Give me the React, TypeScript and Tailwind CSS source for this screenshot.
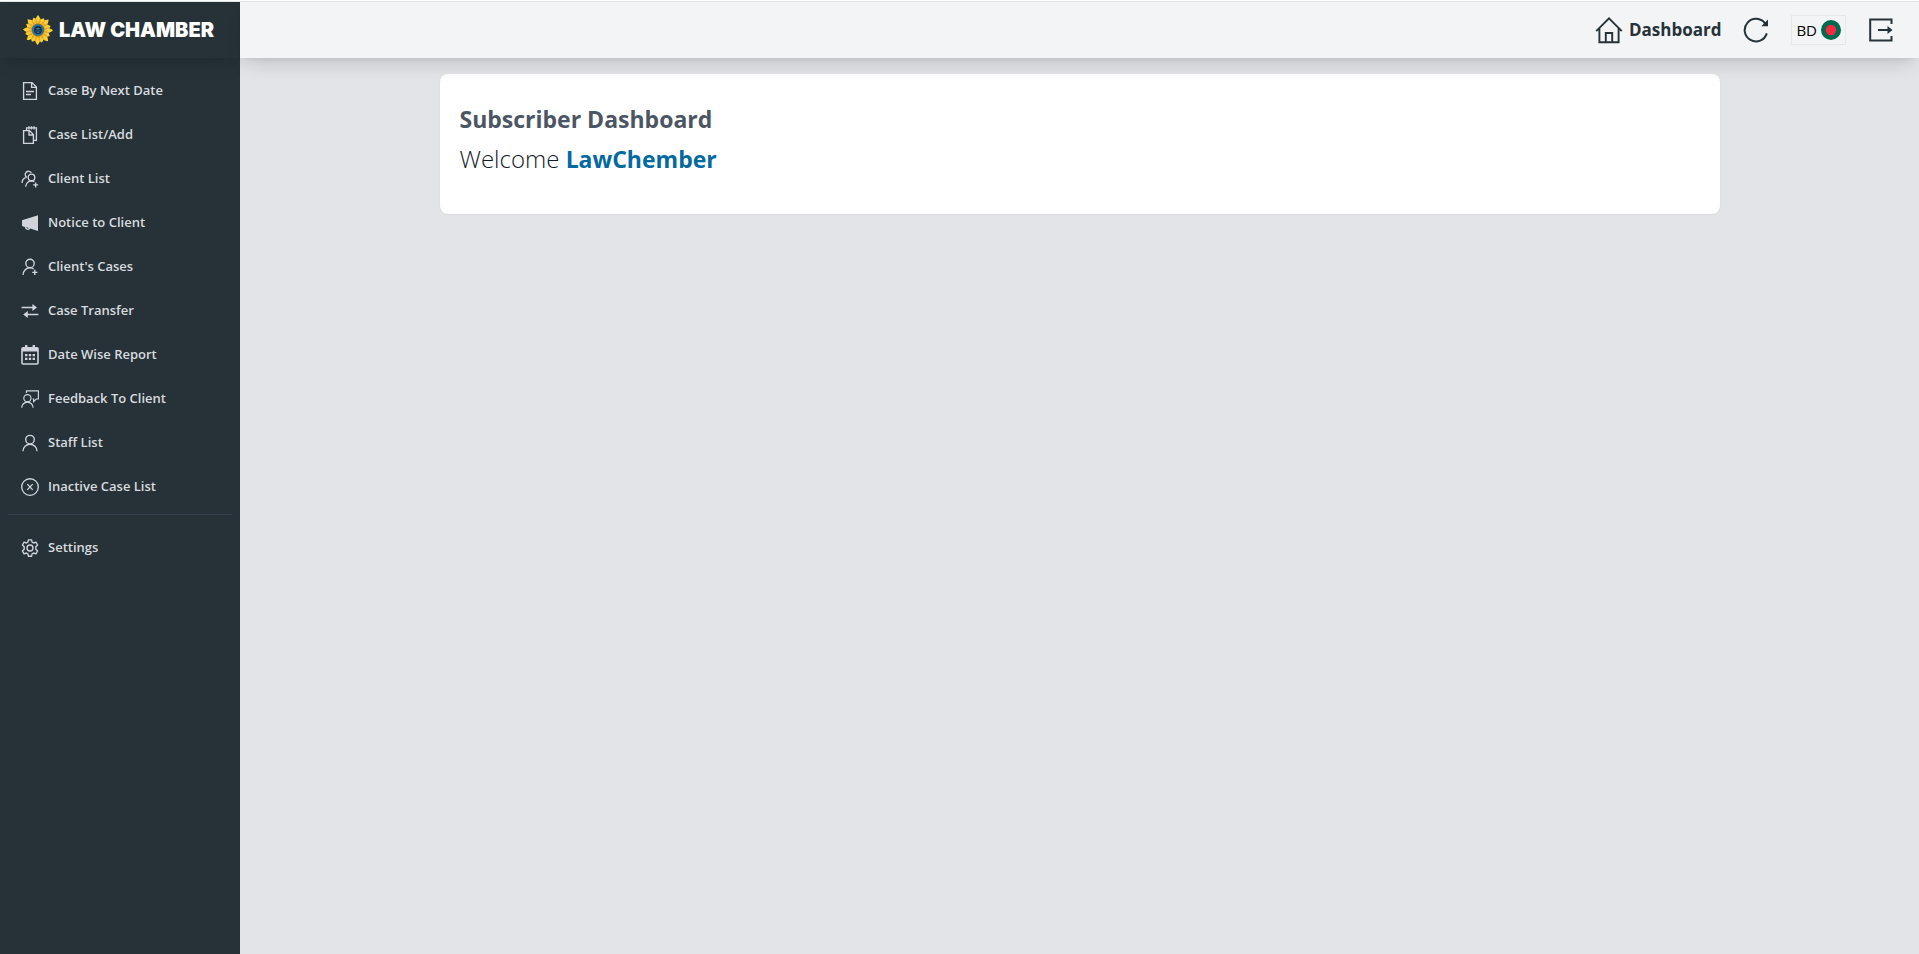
import type { ReactNode } from "react";

const stroke = {
  fill: "none",
  stroke: "currentColor",
  strokeWidth: 1.35,
} as const;

function Icon({ children }: { children: ReactNode }) {
  return (
    <svg viewBox="0 0 18 18" className="size-[18px] shrink-0 overflow-visible text-[#d1d5db]" aria-hidden="true" {...stroke}>
      {children}
    </svg>
  );
}

const items: { label: string; icon: ReactNode }[] = [
  {
    label: "Case By Next Date",
    icon: <path d="M2.6 .6H11L15.4 5V17.4H2.6ZM10.6 .6V5.4H15.4M5 9.5H13M5 12.5H10" />,
  },
  {
    label: "Case List/Add",
    icon: (
      <path d="M2.6 4.6H8.5L12.4 8.5V17.4H2.6ZM8 4.6V9H12.4M5.6 4.4V1.9H15.4V14.4H12.6M8 .2V3.4M10.5 .2V3.4M13 .2V3.4" />
    ),
  },
  {
    label: "Client List",
    icon: (
      <>
        <circle cx="10.5" cy="7.4" r="3.3" />
        <path d="M4.7 16.8A6 6 0 0 1 10.5 10.8Q12.3 10.8 13.3 11.6M5.8 7.4A3.3 3.3 0 1 1 10.3 2.8M5.2 7.4A5.8 5.8 0 0 0 1.1 13M14.6 12.4V17.4M12.1 14.9H17.1" />
      </>
    ),
  },
  {
    label: "Notice to Client",
    icon: (
      <g fill="currentColor" stroke="none">
        <path d="M1 6.2L17 1.2V17L9.2 14.4A2.8 2.8 0 0 1 3.9 13L1 12.1ZM5.2 13.3A1.5 1.5 0 0 0 7.8 14Z" fillRule="evenodd" />
      </g>
    ),
  },
  {
    label: "Client's Cases",
    icon: (
      <>
        <circle cx="9" cy="5.4" r="4.2" />
        <path d="M2.1 17A6.9 6.9 0 0 1 9 9.8Q11.2 9.8 12.7 11M13.8 11.8V17M11.2 14.4H16.4" />
      </>
    ),
  },
  {
    label: "Case Transfer",
    icon: (
      <>
        <path d="M.6 5.5H12M6 12.5H17.4" />
        <path d="M11.4 2L16 5.5L11.4 9ZM6.8 9L2.2 12.5L6.8 16Z" fill="currentColor" stroke="none" />
      </>
    ),
  },
  {
    label: "Date Wise Report",
    icon: (
      <g fill="currentColor" stroke="none">
        <path
          d="M2 1H4V-1H6.4V1H11.6V-1H14V1H16A1.8 1.8 0 0 1 17.8 2.8V17A1.8 1.8 0 0 1 16 18.8H2A1.8 1.8 0 0 1 .2 17V2.8A1.8 1.8 0 0 1 2 1ZM1.8 5.4V17.2H16.2V5.4Z"
          fillRule="evenodd"
        />
        <path d="M4 8H6.4V10.2H4ZM7.8 8H10.2V10.2H7.8ZM11.6 8H14V10.2H11.6ZM4 11.8H6.4V14H4ZM7.8 11.8H10.2V14H7.8ZM11.6 11.8H14V14H11.6Z" />
      </g>
    ),
  },
  {
    label: "Feedback To Client",
    icon: (
      <g strokeWidth="1.15">
        <circle cx="6.4" cy="8.2" r="3.6" />
        <path d="M.7 17.8A5.7 5.7 0 0 1 12.1 17.8M5.4 3V.8H17.4V9H15.2L12.6 11.6V9H11.6" />
      </g>
    ),
  },
  {
    label: "Staff List",
    icon: (
      <>
        <circle cx="9" cy="5.6" r="4.3" />
        <path d="M2 17.2A7 7 0 0 1 16 17.2" />
      </>
    ),
  },
  {
    label: "Inactive Case List",
    icon: (
      <>
        <circle cx="9" cy="9" r="8.3" />
        <path d="M6.3 6.1L11.7 11.9M11.7 6.1L6.3 11.9" />
      </>
    ),
  },
];

const settings = {
  label: "Settings",
  icon: (
    <>
      <circle cx="9" cy="9" r="3" />
      <path
        d="M7.4 .8H10.6L11.1 3.1L12.7 4L14.9 3.2L16.6 6L14.8 7.8V10.2L16.6 12L14.9 14.8L12.7 14L11.1 14.9L10.6 17.2H7.4L6.9 14.9L5.3 14L3.1 14.8L1.4 12L3.2 10.2V7.8L1.4 6L3.1 3.2L5.3 4L6.9 3.1Z"
        strokeLinejoin="round"
      />
    </>
  ),
};

function NavItem({ label, icon }: { label: string; icon: ReactNode }) {
  return (
    <li>
      <a href="#" className="flex h-11 items-center gap-[9px] px-[21px] text-[13px] font-semibold text-[#d8dbdf]">
        <Icon>{icon}</Icon>
        {label}
      </a>
    </li>
  );
}

const petals = [0, 24, 45, 70, 92, 115, 138, 160, 182, 205, 228, 250, 272, 294, 316, 338];

function Sunflower() {
  return (
    <svg viewBox="-15 -15 30 30" className="size-[30px] shrink-0" aria-hidden="true">
      {petals.map((a, i) => (
        <path
          key={a}
          d={i % 2 ? "M0 0C-4.6 -7 -3 -10.5 .6 -13.2C3.2 -10.5 4.6 -7 0 0Z" : "M0 0C-4.6 -7 -2.8 -12 0 -15C2.8 -12 4.6 -7 0 0Z"}
          fill="#f8cf38"
          transform={`rotate(${a})`}
        />
      ))}
      {petals.map((a) => (
        <path key={a} d="M0 0C-1.8 -6 -1.2 -9 0 -12C1.2 -9 1.8 -6 0 0Z" fill="#e8a922" transform={`rotate(${a + 11})`} />
      ))}
      <circle r="6.4" fill="#8a6f30" />
      <circle r="5.8" fill="#2379a5" />
      <circle r="3.9" fill="#10283f" />
      <path d="M0 -2.6V2.4M-2.4 -1.4H2.4M-2.8 .8H-1M1 .8H2.8M-1.4 2.4H1.4" stroke="#4a90b8" strokeWidth=".7" />
    </svg>
  );
}

export default function App() {
  return (
    <div className="flex min-h-screen flex-col bg-[#e2e4e8] font-['Open_Sans','Noto_Sans',sans-serif]">
      <header className="relative z-10 flex h-[58px] border-t border-white">
        <div className="flex w-60 shrink-0 items-center gap-[6px] border-t border-[#dfe5e3] bg-[#263238] pl-[23px] shadow-[0_10px_20px_-5px_rgba(0,0,0,0.12),0_4px_8px_-5px_rgba(0,0,0,0.1)]">
          <Sunflower />
          <span className="font-['Inter',sans-serif] text-[20px] leading-6 font-black text-white">LAW CHAMBER</span>
        </div>
        <div className="flex flex-1 items-center justify-end border-t border-[#dfe5e3] bg-[#f3f4f6] pr-[26px] text-[#263238] shadow-[0_10px_20px_-5px_rgba(0,0,0,0.14),0_4px_8px_-5px_rgba(0,0,0,0.12)]">
          <a href="#" className="flex items-center gap-[6px] text-[17px] font-bold">
            <svg viewBox="0 0 28 28" className="size-7" aria-hidden="true" {...stroke} strokeWidth={1.9}>
              <path d="M1.2 15.2L14 2.4L26.8 15.2M4.4 12.5V26.2H23.6V12.5M10.8 26V17H17.2V26" />
            </svg>
            Dashboard
          </a>
          <button type="button" aria-label="Refresh" className="ml-[22px]">
            <svg viewBox="0 0 26 26" className="size-[26px]" aria-hidden="true" {...stroke} strokeWidth={2}>
              <path d="M23.8 16.4A11.3 11.3 0 1 1 22.2 6.6" />
              <path d="M25 2.5V9.2H18.3Z" fill="currentColor" stroke="none" />
            </svg>
          </button>
          <button
            type="button"
            className="ml-[22px] flex h-[30px] items-center gap-1 border border-[#e5e7eb] px-1 text-[15px] text-black"
          >
            BD
            <svg viewBox="0 0 20 20" className="size-5" aria-hidden="true">
              <circle cx="10" cy="10" r="10" fill="#006a4e" />
              <circle cx="10" cy="10" r="5.2" fill="#f42a41" />
            </svg>
          </button>
          <button type="button" aria-label="Log out" className="ml-[23px]">
            <svg viewBox="0 0 24 24" className="size-6" aria-hidden="true" {...stroke} strokeWidth={2}>
              <path d="M22.5 6V1.5H1.2V22.5H22.5V18M9 12H20" />
              <path d="M18.5 8L23.5 12L18.5 16Z" fill="currentColor" stroke="none" />
            </svg>
          </button>
        </div>
      </header>
      <div className="flex flex-1">
        <aside className="w-60 shrink-0 bg-[#263238] pt-[11px]">
          <nav>
            <ul>
              {items.map((item) => (
                <NavItem key={item.label} {...item} />
              ))}
            </ul>
            <hr className="mx-2 mt-[5px] mb-[11px] border-[#374151]" />
            <ul>
              <NavItem {...settings} />
            </ul>
          </nav>
        </aside>
        <main className="flex-1 px-4 pt-4">
          <section className="mx-auto max-w-7xl rounded-lg bg-white px-5 pt-[25px] pb-[35px] shadow-xs">
            <h1 className="text-[23px] leading-10 font-bold text-[#4b5563]">Subscriber Dashboard</h1>
            <p className="text-[24px] leading-10 font-light text-[#111827]">
              Welcome <strong className="text-[23px] font-bold text-[#0369a1]">LawChember</strong>
            </p>
          </section>
        </main>
      </div>
    </div>
  );
}
